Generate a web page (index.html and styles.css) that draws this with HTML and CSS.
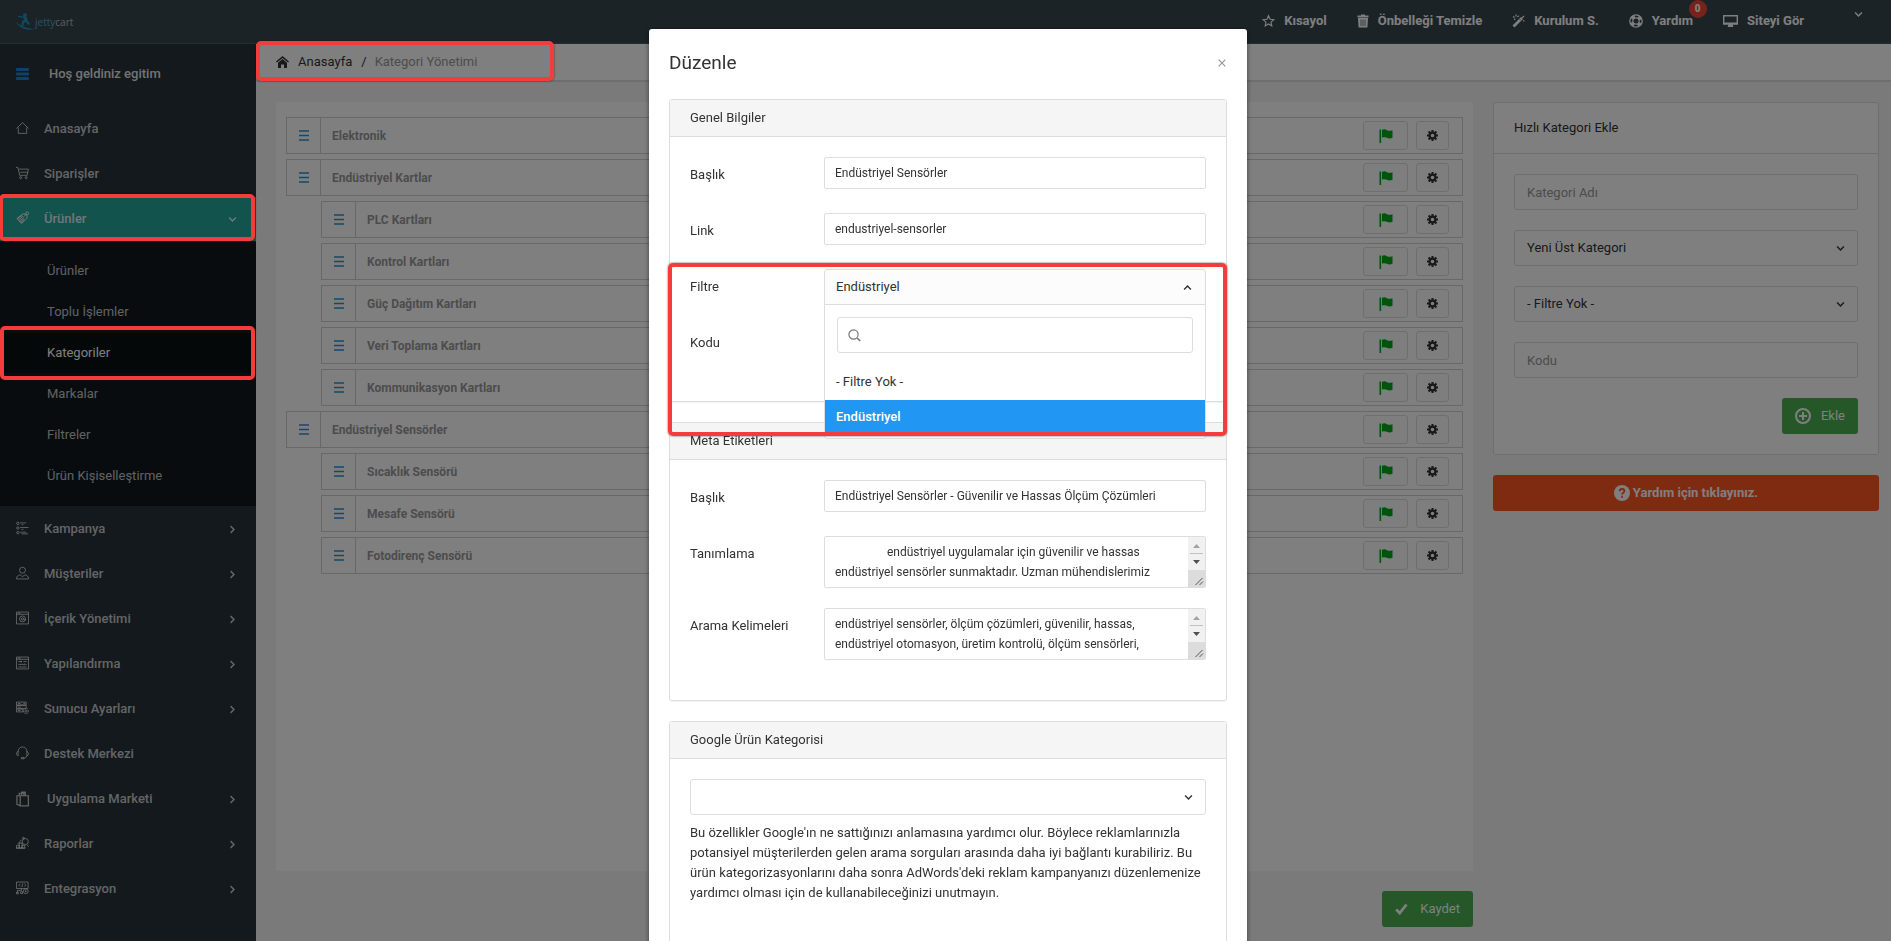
FILE: index.html
```html
<!DOCTYPE html>
<html lang="tr">
<head>
<meta charset="utf-8">
<title>Kategori Yönetimi</title>
<link rel="stylesheet" href="styles.css">
</head>
<body>
<svg class="sprite" aria-hidden="true">
  <symbol id="i-chev" viewBox="0 0 8 8"><path d="M1 2.300l3 3 3-3" fill="none" stroke="currentColor" stroke-width="1.300"/></symbol>
  <symbol id="i-lines" viewBox="0 0 10 11"><path d="M0 1h10M0 5.500h10M0 10h10" stroke="currentColor" stroke-width="1.400"/></symbol>
  <symbol id="i-flag" viewBox="0 0 14 14"><path d="M.5.500h1.600V14H.5z" fill="currentColor"/><path d="M3 .8c2-.9 3.600-.6 5 .4 1.500.9 3.500.8 5.500 0v7.600c-2 .9-4 .9-5.500 0C6.600 8 5 8 3 8.600z" fill="currentColor"/></symbol>
  <symbol id="i-cog" viewBox="0 0 16 16"><circle cx="8" cy="8" r="4.200" fill="none" stroke="currentColor" stroke-width="3.200"/><path d="M8 0v3M8 13v3M0 8h3M13 8h3M2.300 2.300l2.100 2.100M11.600 11.600l2.100 2.100M13.700 2.300l-2.100 2.100M4.400 11.600l-2.100 2.100" stroke="currentColor" stroke-width="3"/></symbol>
</svg>
<div class="page">
  <header class="navbar">
    <a class="brand" href="#">
      <svg width="18" height="17" viewBox="0 0 18 17" fill="#1f93c4"><circle cx="9" cy="2.200" r="1.900"/><path d="M2 2.800l5.500.8 3.200.3.900 3.500 2.400 3.500-1.500 1-2.900-3-1.600 1.300-.5 2.800-2.200-.4.700-4 2-2.200-.2-1.400-5.800-1.100z"/><path d="M0 9c3.500 3.300 8 5.600 17.800 7-4 1.400-8.800.6-12.300-1.500C3 13 1 11 0 9z"/></svg>
      <span class="brand-a">jetty</span><span class="brand-b">cart</span>
    </a>
    <nav class="topnav">
      <a href="#"><svg width="13" height="14" viewBox="0 0 14 14"><path d="M7 1.300l1.700 3.800 4.100.4-3.100 2.700.9 4.100L7 10.200l-3.600 2.100.9-4.100L1.200 5.500l4.100-.4z" fill="none" stroke="currentColor" stroke-width="1.200"/></svg>Kısayol</a>
      <a href="#"><svg width="12" height="14" viewBox="0 0 12 14"><path d="M4 1.500V.5h4v1h3.500v2H.5v-2z" fill="currentColor"/><path d="M1 4h10l-.6 9.500H1.600z" fill="currentColor"/><path d="M4 5.500v6.500M6 5.500v6.500M8 5.500v6.500" stroke="#37474f" stroke-width=".7"/></svg>Önbelleği Temizle</a>
      <a href="#"><svg width="13" height="14" viewBox="0 0 13 14"><path d="M1.500 12.500l8.500-8.500" stroke="currentColor" stroke-width="2.800"/><path d="M10.200 3.800l1.800-1.800M4 .5v2M1 2.500l1.600 1M6.800 1.800L5.500 3M11 6.500l1.500.8M3 4.500l-.5 1.500" stroke="currentColor" stroke-width="1.200"/><path d="M7.500 5l1.500 1.500" stroke="#37474f" stroke-width=".6"/></svg>Kurulum S.</a>
      <a href="#"><svg width="14" height="14" viewBox="0 0 14 14" fill="none" stroke="currentColor"><circle cx="7" cy="7" r="6.200" stroke-width="1.300"/><circle cx="7" cy="7" r="3.200" stroke-width="1.200"/><circle cx="7" cy="7" r="4.700" stroke-width="3" stroke-dasharray="3.690 3.690" stroke-dashoffset="-1.850"/></svg><span class="has-badge">Yardım<b class="badge">0</b></span></a>
      <a href="#"><svg width="15" height="14" viewBox="0 0 15 14"><path d="M.7 1.700h13.600v8.200H.7z" fill="none" stroke="currentColor" stroke-width="1.400"/><path d="M0 8.500h15v2H0zM5.500 10h4l.8 3H4.700z" fill="currentColor"/></svg>Siteyi Gör</a>
      <button class="user-toggle" aria-label="Kullanıcı"><svg width="9" height="9"><use href="#i-chev"/></svg></button>
    </nav>
  </header>
  <div class="columns">
    <aside class="sidebar">
      <div class="welcome"><svg width="13" height="12" viewBox="0 0 13 12"><path d="M1 1.500h11M1 6h11M1 10.500h11" stroke="#2080d8" stroke-width="2.800" stroke-linecap="round"/></svg>Hoş geldiniz egitim</div>
      <ul class="menu">
        <li><a href="#"><svg class="mi" viewBox="0 0 14 14"><path d="M.5 7.500L7 1.200l6.500 6.300M2.500 6.500v6.300h9V6.500"/></svg>Anasayfa</a></li>
        <li><a href="#"><svg class="mi" viewBox="0 0 14 14"><path d="M0 1h2l2 8.500h8l1.300-6.700H2.700M4.500 6.200h8"/><circle cx="5" cy="12" r="1.100"/><circle cx="11" cy="12" r="1.100"/></svg>Siparişler</a></li>
        <li class="active"><a href="#"><svg class="mi" viewBox="0 0 14 14"><path d="M1 7.500L7.500 2.500l4 .5.500 4L6 13z" /><path d="M1.500 8l5-4M2.500 9l5-4M3.500 10.500l5-4M4.500 11.500l4-3.500M5.500 12.500l4-3.500"/><circle cx="12" cy="2" r="1.600"/><path d="M11 3L8.500 5.500"/></svg>Ürünler<svg class="arrow open" viewBox="0 0 8 8"><use href="#i-chev"/></svg></a><i class="mark"></i>
          <ul class="submenu">
            <li><a href="#">Ürünler</a></li>
            <li><a href="#">Toplu İşlemler</a></li>
            <li class="current"><a href="#">Kategoriler</a><i class="mark mark-sub"></i></li>
            <li><a href="#">Markalar</a></li>
            <li><a href="#">Filtreler</a></li>
            <li><a href="#">Ürün Kişiselleştirme</a></li>
          </ul>
        </li>
        <li><a href="#"><svg class="mi" viewBox="0 0 14 14"><circle cx="2" cy="2" r="1.300"/><circle cx="2" cy="7" r="1.300"/><circle cx="2" cy="12" r="1.300"/><path d="M4.500 1.500H11M6 3.500h2M4.500 6.500h9M6 8.500h2M4.500 11.500H11M6 13.300h7"/></svg>Kampanya<svg class="arrow" viewBox="0 0 8 8"><use href="#i-chev"/></svg></a></li>
        <li><a href="#"><svg class="mi" viewBox="0 0 14 14"><circle cx="7" cy="4" r="3.200"/><path d="M4.500 9c-2.500.5-4 1.700-4 4.400h13c0-2.700-1.500-3.900-4-4.400L7 11z"/></svg>Müşteriler<svg class="arrow" viewBox="0 0 8 8"><use href="#i-chev"/></svg></a></li>
        <li><a href="#"><svg class="mi" viewBox="0 0 14 14"><path d="M.5.600h13v12.800H.5zM.5 3h13M2 1.800h3"/><circle cx="7" cy="8" r="3.200"/><circle cx="7" cy="8" r="1.300"/><path d="M8.300 8c.3 1.500 2 1.500 2.200 0"/></svg>İçerik Yönetimi<svg class="arrow" viewBox="0 0 8 8"><use href="#i-chev"/></svg></a></li>
        <li><a href="#"><svg class="mi" viewBox="0 0 14 14"><path d="M.5.600h13v12.800H.5zM.5 3h13M2 1.800h3M2.500 5.500h4M8 5.500h3.500M2.500 8.500h6M10 8.500h1.500M2.500 11.300h3M7.500 11.300h4M5.500 4.500v2M9 7.500v2M6.500 10.300v2"/></svg>Yapılandırma<svg class="arrow" viewBox="0 0 8 8"><use href="#i-chev"/></svg></a></li>
        <li><a href="#"><svg class="mi" viewBox="0 0 14 14"><path d="M.5.600h10.500v3H.5zM.5 4.400h10.500v3H.5zM.5 8.200h7v3h-7zM2 2.100h3M2 5.900h3M2 9.700h3M8 2.100h2"/><circle cx="10.800" cy="10.300" r="1.200"/><circle cx="10.800" cy="10.300" r="2.800" stroke-dasharray="1.500 .8"/></svg>Sunucu Ayarları<svg class="arrow" viewBox="0 0 8 8"><use href="#i-chev"/></svg></a></li>
        <li><a href="#"><svg class="mi" viewBox="0 0 14 14"><path d="M2.300 6V5.200a4.700 4.700 0 0 1 9.400 0V6M2.300 5.500v4.500C0 10 0 5.500 2.300 5.500M11.700 5.500v4.500c2.300 0 2.300-4.500 0-4.500M11.500 10c-.3 2-1.500 2.500-3 2.500M5.800 11.800h2.700v1.500H5.800z"/></svg>Destek Merkezi</a></li>
        <li class="wide"><a href="#"><svg class="mi bag" viewBox="0 0 14 16"><path d="M4.500 4.500h8.800v10.800H4.500zM4.500 4.500H1v9.300l3.500 1.500M3.500 4.500V1.800h5v2.700M6 4.500V.7h4v3.800" stroke-width="1.300"/></svg>Uygulama Marketi<svg class="arrow" viewBox="0 0 8 8"><use href="#i-chev"/></svg></a></li>
        <li><a href="#"><svg class="mi" viewBox="0 0 14 14"><path d="M.5 12.500v-3h3v3zM3.500 12.500V7h3v5.500zM6.500 12.500V9.500h3v3zM0 12.500h10M2 8l4-4.500M12 9l1.500 2"/><circle cx="10" cy="5.500" r="3.300"/><circle cx="8" cy="1.800" r="1"/></svg>Raporlar<svg class="arrow" viewBox="0 0 8 8"><use href="#i-chev"/></svg></a></li>
        <li><a href="#"><svg class="mi" viewBox="0 0 14 14"><path d="M.5.600h12.500v7H.5zM4.500 2.500L3 4l1.500 1.500M9 2.500L10.500 4 9 5.500M7.300 2l-1 4M6 7.600v2H1.500v2M.5 11.500h2v1.800h-2zM5 11h2v2H5z"/><circle cx="10.500" cy="10.500" r="2.600"/><path d="M9.500 10.500h2M10.500 9.500v2"/></svg>Entegrasyon<svg class="arrow" viewBox="0 0 8 8"><use href="#i-chev"/></svg></a></li>
      </ul>
    </aside>
    <main class="main">
      <div class="crumbs">
        <svg width="13" height="12" viewBox="0 0 13 12"><path d="M6.500 0L13 5.600l-.9 1L6.500 1.900.9 6.600 0 5.600z" fill="currentColor"/><path d="M6.500 3L11 6.800V12H8V8.500H5V12H2V6.800z" fill="currentColor"/></svg>
        <a href="#">Anasayfa</a><span>/</span><span class="here">Kategori Yönetimi</span><i class="mark mark-crumbs"></i>
      </div>
      <div class="content">
        <section class="list-col">
          <div class="tree">
            <div class="row"><span class="grip"><svg width="10" height="11"><use href="#i-lines"/></svg></span><span class="name">Elektronik</span><button class="b-flag" aria-label="Durum"><svg width="14" height="14"><use href="#i-flag"/></svg></button><button class="b-cog" aria-label="Ayarlar"><svg width="11" height="11"><use href="#i-cog"/></svg></button></div>
            <div class="row"><span class="grip"><svg width="10" height="11"><use href="#i-lines"/></svg></span><span class="name">Endüstriyel Kartlar</span><button class="b-flag" aria-label="Durum"><svg width="14" height="14"><use href="#i-flag"/></svg></button><button class="b-cog" aria-label="Ayarlar"><svg width="11" height="11"><use href="#i-cog"/></svg></button></div>
            <div class="row child"><span class="grip"><svg width="10" height="11"><use href="#i-lines"/></svg></span><span class="name">PLC Kartları</span><button class="b-flag" aria-label="Durum"><svg width="14" height="14"><use href="#i-flag"/></svg></button><button class="b-cog" aria-label="Ayarlar"><svg width="11" height="11"><use href="#i-cog"/></svg></button></div>
            <div class="row child"><span class="grip"><svg width="10" height="11"><use href="#i-lines"/></svg></span><span class="name">Kontrol Kartları</span><button class="b-flag" aria-label="Durum"><svg width="14" height="14"><use href="#i-flag"/></svg></button><button class="b-cog" aria-label="Ayarlar"><svg width="11" height="11"><use href="#i-cog"/></svg></button></div>
            <div class="row child"><span class="grip"><svg width="10" height="11"><use href="#i-lines"/></svg></span><span class="name">Güç Dağıtım Kartları</span><button class="b-flag" aria-label="Durum"><svg width="14" height="14"><use href="#i-flag"/></svg></button><button class="b-cog" aria-label="Ayarlar"><svg width="11" height="11"><use href="#i-cog"/></svg></button></div>
            <div class="row child"><span class="grip"><svg width="10" height="11"><use href="#i-lines"/></svg></span><span class="name">Veri Toplama Kartları</span><button class="b-flag" aria-label="Durum"><svg width="14" height="14"><use href="#i-flag"/></svg></button><button class="b-cog" aria-label="Ayarlar"><svg width="11" height="11"><use href="#i-cog"/></svg></button></div>
            <div class="row child"><span class="grip"><svg width="10" height="11"><use href="#i-lines"/></svg></span><span class="name">Kommunikasyon Kartları</span><button class="b-flag" aria-label="Durum"><svg width="14" height="14"><use href="#i-flag"/></svg></button><button class="b-cog" aria-label="Ayarlar"><svg width="11" height="11"><use href="#i-cog"/></svg></button></div>
            <div class="row"><span class="grip"><svg width="10" height="11"><use href="#i-lines"/></svg></span><span class="name">Endüstriyel Sensörler</span><button class="b-flag" aria-label="Durum"><svg width="14" height="14"><use href="#i-flag"/></svg></button><button class="b-cog" aria-label="Ayarlar"><svg width="11" height="11"><use href="#i-cog"/></svg></button></div>
            <div class="row child"><span class="grip"><svg width="10" height="11"><use href="#i-lines"/></svg></span><span class="name">Sıcaklık Sensörü</span><button class="b-flag" aria-label="Durum"><svg width="14" height="14"><use href="#i-flag"/></svg></button><button class="b-cog" aria-label="Ayarlar"><svg width="11" height="11"><use href="#i-cog"/></svg></button></div>
            <div class="row child"><span class="grip"><svg width="10" height="11"><use href="#i-lines"/></svg></span><span class="name">Mesafe Sensörü</span><button class="b-flag" aria-label="Durum"><svg width="14" height="14"><use href="#i-flag"/></svg></button><button class="b-cog" aria-label="Ayarlar"><svg width="11" height="11"><use href="#i-cog"/></svg></button></div>
            <div class="row child"><span class="grip"><svg width="10" height="11"><use href="#i-lines"/></svg></span><span class="name">Fotodirenç Sensörü</span><button class="b-flag" aria-label="Durum"><svg width="14" height="14"><use href="#i-flag"/></svg></button><button class="b-cog" aria-label="Ayarlar"><svg width="11" height="11"><use href="#i-cog"/></svg></button></div>
          </div>
          <button class="btn save"><svg width="13" height="12" viewBox="0 0 13 12"><path d="M1.200 6.500l3.500 3.600L11.500 1.500" fill="none" stroke="currentColor" stroke-width="2.800"/></svg>Kaydet</button>
        </section>
        <section class="side-col">
          <form class="card">
            <h2 class="card-title">Hızlı Kategori Ekle</h2>
            <div class="card-body">
              <input class="field" type="text" placeholder="Kategori Adı" aria-label="Kategori Adı">
              <div class="pick"><select class="field" aria-label="Üst kategori"><option>Yeni Üst Kategori</option></select><svg width="9" height="9"><use href="#i-chev"/></svg></div>
              <div class="pick"><select class="field" aria-label="Filtre"><option>- Filtre Yok -</option></select><svg width="9" height="9"><use href="#i-chev"/></svg></div>
              <input class="field" type="text" placeholder="Kodu" aria-label="Kodu">
              <button class="btn add" type="button"><svg width="16" height="16" viewBox="0 0 16 16" fill="none" stroke="currentColor"><circle cx="8" cy="8" r="7" stroke-width="2"/><path d="M8 4v8M4 8h8" stroke-width="2"/></svg>Ekle</button>
            </div>
          </form>
          <a class="help" href="#"><svg width="16" height="16" viewBox="0 0 16 16"><circle cx="8" cy="8" r="8" fill="#fff"/><path d="M5.700 6.200c0-3 4.700-2.800 4.700-.2 0 1.700-2.300 1.700-2.300 3.400M8 10.700v2" fill="none" stroke="#ff5722" stroke-width="1.800"/></svg>Yardım için tıklayınız.</a>
        </section>
      </div>
    </main>
  </div>
</div>

<div class="backdrop"></div>
<div class="modal-wrap">
  <div class="modal" role="dialog" aria-labelledby="dlg-title">
    <div class="modal-head"><h1 id="dlg-title">Düzenle</h1><button class="close" aria-label="Kapat"><svg width="8" height="8" viewBox="0 0 8 8"><path d="M.7.700l6.600 6.600M7.300.700L.7 7.300" stroke="currentColor" stroke-width="1.200"/></svg></button></div>
    <section class="panel">
      <h2>Genel Bilgiler</h2>
      <div class="panel-body">
        <div class="group"><label for="g-title">Başlık</label><input class="small" id="g-title" type="text" value="Endüstriyel Sensörler"></div>
        <div class="group"><label for="g-link">Link</label><input class="small" id="g-link" type="text" value="endustriyel-sensorler"></div>
        <div class="group"><label for="g-filter">Filtre</label>
          <div class="combo">
            <button class="combo-btn" id="g-filter" type="button" aria-haspopup="listbox" aria-expanded="true">Endüstriyel<svg class="up" width="9" height="9"><use href="#i-chev"/></svg></button>
            <div class="combo-menu">
              <div class="combo-search"><svg width="13" height="13" viewBox="0 0 13 13" fill="none" stroke="#777"><circle cx="5.500" cy="5.500" r="4.600" stroke-width="1.200"/><path d="M9 9l3.200 3" stroke-width="1.700"/></svg><input type="search" aria-label="Filtre ara"></div>
              <ul role="listbox"><li role="option">- Filtre Yok -</li><li role="option" aria-selected="true" class="on">Endüstriyel</li></ul>
            </div>
          </div>
        </div>
        <div class="group"><label>Kodu</label></div>
        <i class="mark mark-filter"></i>
      </div>
    </section>
    <section class="panel">
      <h2>Meta Etiketleri</h2>
      <div class="panel-body">
        <div class="group"><label for="m-title">Başlık</label><input class="small" id="m-title" type="text" value="Endüstriyel Sensörler - Güvenilir ve Hassas Ölçüm Çözümleri"></div>
        <div class="group"><label for="m-desc">Tanımlama</label><div class="area"><textarea class="lead" id="m-desc">endüstriyel uygulamalar için güvenilir ve hassas endüstriyel sensörler sunmaktadır. Uzman mühendislerimiz</textarea><svg class="bar" width="17" height="50" viewBox="0 0 17 50"><path d="M0 0h17v33H0z" fill="#f1f1f1"/><path d="M0 33h17v17H0z" fill="#dcdcdc"/><path d="M2 16.500h13" stroke="#c1c1c1"/><path d="M5 11h7L8.500 7z" fill="#a3a3a3"/><path d="M5 23h7l-3.500 4z" fill="#505050"/><path d="M7.500 48l7-7M11.500 48l3.500-3.500" stroke="#555"/></svg></div></div>
        <div class="group"><label for="m-keys">Arama Kelimeleri</label><div class="area"><textarea id="m-keys">endüstriyel sensörler, ölçüm çözümleri, güvenilir, hassas, endüstriyel otomasyon, üretim kontrolü, ölçüm sensörleri,</textarea><svg class="bar" width="17" height="50" viewBox="0 0 17 50"><path d="M0 0h17v33H0z" fill="#f1f1f1"/><path d="M0 33h17v17H0z" fill="#dcdcdc"/><path d="M2 16.500h13" stroke="#c1c1c1"/><path d="M5 11h7L8.500 7z" fill="#a3a3a3"/><path d="M5 23h7l-3.500 4z" fill="#505050"/><path d="M7.500 48l7-7M11.500 48l3.500-3.500" stroke="#555"/></svg></div></div>
      </div>
    </section>
    <section class="panel">
      <h2>Google Ürün Kategorisi</h2>
      <div class="panel-body tall">
        <div class="pick"><select class="field" aria-label="Google Ürün Kategorisi"><option></option></select><svg width="9" height="9"><use href="#i-chev"/></svg></div>
        <p>Bu özellikler Google'ın ne sattığınızı anlamasına yardımcı olur. Böylece reklamlarınızla potansiyel müşterilerden gelen arama sorguları arasında daha iyi bağlantı kurabiliriz. Bu ürün kategorizasyonlarını daha sonra AdWords'deki reklam kampanyanızı düzenlemenize yardımcı olması için de kullanabileceğinizi unutmayın.</p>
      </div>
    </section>
  </div>
</div>
</body>
</html>
```
FILE: styles.css
```css
* { box-sizing: border-box; }
body { margin: 0; font: 13px/20px Roboto, "Noto Sans", sans-serif; color: #333; background: #f5f5f5; overflow: hidden; }
input, select, textarea, button { font: inherit; color: inherit; margin: 0; }
button { cursor: pointer; }
a { color: inherit; text-decoration: none; }
ul { list-style: none; margin: 0; padding: 0; }
h1, h2, p { margin: 0; font-weight: 400; }
svg { display: block; flex: none; }
.sprite { position: absolute; width: 0; height: 0; }

.page { display: flex; flex-direction: column; height: 100vh; overflow: hidden; }
.columns { display: flex; flex: 1; min-height: 0; }

/* Top bar */
.navbar { display: flex; justify-content: space-between; height: 44px; flex: none; background: #37474f; border-bottom: 1px solid #4b5a61; color: #fff; }
.brand { display: flex; align-items: center; padding-left: 16px; font: 10px/16px "Open Sans", sans-serif; }
.brand svg { margin-right: 1px; }
.brand-a { color: #4aa5c9; }
.brand-b { color: #b4bcc0; }
.topnav { display: flex; align-items: center; gap: 30px; padding: 0 28px 2px 0; font-weight: 700; }
.topnav a { display: flex; align-items: center; gap: 9px; }
.has-badge { position: relative; }
.badge { position: absolute; left: 37px; top: -11px; width: 18px; height: 18px; border-radius: 50%; background: #f44336; font-size: 10px; line-height: 18px; text-align: center; }
.user-toggle { border: 0; background: none; padding: 0; margin: 0 0 12px 20px; color: #fff; }

/* Sidebar */
.sidebar { width: 256px; flex: none; background: #263238; color: rgba(255,255,255,.75); }
.welcome { display: flex; align-items: center; gap: 20px; padding: 20px 16px 23px; font-weight: 500; color: rgba(255,255,255,.9); }
.menu > li > a { display: flex; align-items: center; gap: 15px; padding: 12px 19px 12px 16px; margin-bottom: 1px; font-weight: 500; }
.menu > .wide > a { gap: 18px; }
.mi { width: 13px; height: 14px; fill: none; stroke: currentColor; stroke-width: 1; margin-bottom: 2px; }
.mi.bag { height: 16px; margin-bottom: 0; }
.arrow { width: 9px; height: 9px; margin-left: auto; transform: rotate(-90deg); }
.arrow.open { transform: none; }
.active { position: relative; }
.menu > .active > a { background: #26a69a; color: rgba(255,255,255,.85); }
.submenu { padding: 8px 0 10px; margin-bottom: 1px; background: #10181c; }
.submenu li { position: relative; margin-top: 1px; }
.submenu a { display: block; padding: 10px 16px 10px 47px; }
.submenu .current a { background: #0a1012; color: #fff; }

/* Highlight frames */
.mark { position: absolute; z-index: 30; border: 4px solid #f43c3c; border-radius: 5px; box-shadow: 0 0 2px rgba(60,0,0,.8); pointer-events: none; }
.active > .mark { left: -1px; right: 1px; top: -3px; height: 47px; }
.submenu .mark-sub { left: 0; right: 1px; top: -7px; bottom: -7px; }
.mark-crumbs { left: 0; width: 298px; top: -3px; bottom: -1px; }
.mark-filter { left: -2px; right: -1px; top: 126px; height: 173px; }

/* Main area */
.main { flex: 1; min-width: 0; display: flex; flex-direction: column; }
.crumbs { position: relative; display: flex; align-items: center; gap: 9px; height: 37px; flex: none; padding: 0 20px; background: #fff; border-bottom: 1px solid #ddd; box-shadow: 0 1px 0 #ddd; }
.crumbs .here { margin-left: -1px; color: #999; }
.content { flex: 1; display: grid; grid-template-columns: minmax(0, 1fr) 386px; gap: 20px; padding: 21px 12px 14px 20px; }
.list-col { display: flex; flex-direction: column; gap: 20px; }
.tree { flex: 1; display: flex; flex-direction: column; gap: 5px; padding: 15px 10px; background: #fff; }
.row { display: flex; align-items: center; height: 37px; padding-right: 13px; border: 1px solid #d0d0d0; }
.row.child { margin-left: 35px; }
.grip { width: 34px; align-self: stretch; display: grid; place-items: center; border-right: 1px solid #d0d0d0; color: #2196d8; }
.name { flex: 1; padding-left: 11px; font-size: 12px; font-weight: 700; color: #999; }
.b-flag, .b-cog { display: grid; place-items: center; height: 29px; padding: 0; border: 1px solid #ddd; border-radius: 3px; background: #fcfcfc; }
.b-flag { width: 45px; margin-right: 8px; color: #00a81c; }
.b-cog { width: 33px; color: #333; }
.btn { display: flex; align-items: center; height: 36px; padding: 0 13px; border: 0; border-radius: 3px; background: #4caf50; color: #fff; }
.save { align-self: flex-end; gap: 12px; }
.add { align-self: flex-end; gap: 10px; }

.side-col { display: flex; flex-direction: column; gap: 20px; align-self: start; }
.card { background: #fff; border: 1px solid #ddd; border-radius: 3px; }
.card-title { padding: 15px 20px; border-bottom: 1px solid #ddd; font-size: 13px; line-height: 20px; }
.card-body { display: flex; flex-direction: column; gap: 20px; padding: 20px; }
.field { display: block; width: 100%; height: 36px; padding: 7px 12px; border: 1px solid #ddd; border-radius: 3px; background: #fff; appearance: none; }
.field::placeholder { color: #999; opacity: 1; }
.pick { position: relative; }
.pick svg { position: absolute; right: 13px; top: 14px; pointer-events: none; }
.help { display: flex; justify-content: center; align-items: center; gap: 3px; height: 36px; border-radius: 3px; background: #ff5722; color: #fff; font-weight: 700; }

/* Dialog */
.backdrop { position: fixed; inset: 0; z-index: 20; background: rgba(0,0,0,.5); }
.modal-wrap { position: fixed; inset: 0; z-index: 25; overflow: hidden; padding: 29px 0 0 5px; }
.modal { width: 598px; margin: 0 auto; padding: 20px; border-radius: 3px; background: #fff; box-shadow: 0 1px 5px rgba(0,0,0,.5); }
.modal-head { display: flex; align-items: center; justify-content: space-between; padding: 2px 1px 24px 0; }
.modal-head h1 { font-size: 19px; line-height: 24px; }
.close { border: 0; padding: 0; background: none; color: #999; }
.panel { margin-bottom: 20px; border: 1px solid #ddd; border-radius: 3px; box-shadow: 0 1px 1px rgba(0,0,0,.05); }
.panel h2 { padding: 8px 20px; border-bottom: 1px solid #ddd; background: #f5f5f5; font-size: 13px; line-height: 20px; }
.panel-body { position: relative; padding: 20px; }
.group { display: grid; grid-template-columns: 134px minmax(0, 1fr); align-items: start; min-height: 36px; margin-bottom: 20px; }
.group label { padding-top: 8px; }
.small { width: 100%; height: 32px; padding: 5px 10px; border: 1px solid #ddd; border-radius: 2px; font-size: 12px; background: #fff; }
.area { display: flex; height: 52px; border: 1px solid #ddd; border-radius: 2px; overflow: hidden; }
.area textarea { flex: 1; min-width: 0; padding: 5px 9px 5px 10px; border: 0; resize: none; overflow: hidden; background: none; font-size: 12px; line-height: 20px; }
.area .lead { text-indent: 52px; }
.combo { position: relative; }
.combo-btn { display: flex; align-items: center; justify-content: space-between; width: 100%; height: 36px; padding: 0 13px 0 11px; border: 1px solid #ddd; border-radius: 3px 3px 0 0; background: #fcfcfc; }
.up { transform: rotate(180deg); }
.combo-menu { position: absolute; z-index: 5; left: 0; right: 0; top: 35px; padding-bottom: 4px; border: 1px solid #ddd; border-radius: 0 0 3px 3px; background: #fff; }
.combo-search { display: flex; align-items: center; gap: 8px; height: 36px; margin: 12px 12px 11px; padding: 0 10px; border: 1px solid #ddd; border-radius: 3px; }
.combo-search input { flex: 1; min-width: 0; border: 0; outline: 0; background: none; }
.combo-menu li { padding: 8px 11px; }
.combo-menu .on { padding: 7px 11px; background: #2196f3; color: #fff; font-weight: 500; }
.panel-body.tall { padding-bottom: 80px; }
.panel-body p { padding-top: 8px; }
```
